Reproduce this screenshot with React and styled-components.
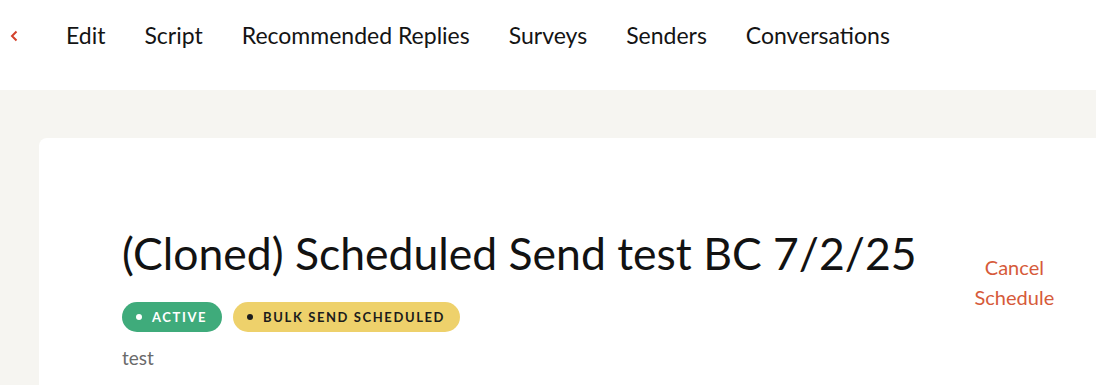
import React from "react";
import styled, { createGlobalStyle } from "styled-components";

const tabs = ["Edit", "Script", "Recommended Replies", "Surveys", "Senders", "Conversations"];

export default function App() {
  return (
    <>
      <GlobalStyle />
      <Page>
        <TopNav>
          <BackButton aria-label="Back">
            <svg width="8" height="12" viewBox="0 0 8 12" fill="none">
              <path d="M6.5 1.5L2 6l4.5 4.5" stroke="#d3412b" strokeWidth="2" />
            </svg>
          </BackButton>
          {tabs.map((t) => (
            <Tab key={t}>{t}</Tab>
          ))}
        </TopNav>
        <Main>
          <Card>
            <HeaderRow>
              <Info>
                <Title>(Cloned) Scheduled Send test BC 7/2/25</Title>
                <Badges>
                  <Badge $bg="#3fab7b" $fg="#ffffff">
                    <Dot $fg="#ffffff" />
                    ACTIVE
                  </Badge>
                  <Badge $bg="#eed16b" $fg="#1c1c1c">
                    <Dot $fg="#1c1c1c" />
                    BULK SEND SCHEDULED
                  </Badge>
                </Badges>
                <Description>test</Description>
              </Info>
              <CancelLink>
                Cancel
                <br />
                Schedule
              </CancelLink>
            </HeaderRow>
          </Card>
        </Main>
      </Page>
    </>
  );
}

const GlobalStyle = createGlobalStyle`
  html, body {
    margin: 0;
    padding: 0;
    overflow: hidden;
    background: #f6f5f1;
  }
  body {
    font-family: "Lato", "Noto Sans", sans-serif;
    color: #1a1a1a;
  }
`;

const Page = styled.div`
  width: 1096px;
  height: 385px;
  overflow: hidden;
  background: #f6f5f1;
`;

const TopNav = styled.nav`
  height: 90px;
  background: #ffffff;
  display: flex;
  align-items: center;
  padding-left: 10px;
  box-sizing: border-box;
`;

const BackButton = styled.button`
  border: 0;
  background: none;
  padding: 0;
  width: 10px;
  display: flex;
  align-items: center;
  margin-right: 46px;
  margin-top: -19px;
  cursor: pointer;
`;

const Tab = styled.a`
  font-size: 23px;
  color: #141414;
  margin-right: 39px;
  margin-top: -20px;
  cursor: pointer;
`;

const Main = styled.main`
  padding: 48px 0 0 39px;
`;

const Card = styled.section`
  background: #ffffff;
  border-radius: 8px 0 0 0;
  width: calc(100% + 40px);
  min-height: 260px;
  padding: 89px 0 0 83px;
  box-sizing: border-box;
`;

const HeaderRow = styled.div`
  display: flex;
  align-items: flex-start;
`;

const Info = styled.div`
  display: flex;
  flex-direction: column;
`;

const Title = styled.h1`
  margin: 0;
  font-size: 44.5px;
  font-weight: 400;
  line-height: 52px;
  color: #121212;
`;

const Badges = styled.div`
  display: flex;
  gap: 11px;
  margin-top: 23px;
`;

const Badge = styled.span`
  display: inline-flex;
  align-items: center;
  height: 30px;
  padding: 0 15px 0 14px;
  border-radius: 15px;
  background: ${(p) => p.$bg};
  color: ${(p) => p.$fg};
  font-size: 13px;
  font-weight: 700;
  letter-spacing: 1.6px;
`;

const Dot = styled.span`
  width: 6px;
  height: 6px;
  border-radius: 50%;
  background: ${(p) => p.$fg};
  margin-right: 10px;
`;

const Description = styled.p`
  margin: 14px 0 0;
  font-size: 19px;
  color: #6a6a6a;
`;

const CancelLink = styled.a`
  margin-left: 58px;
  margin-top: 25px;
  font-size: 20px;
  line-height: 30px;
  color: #d65a3a;
  text-align: center;
  cursor: pointer;
`;
